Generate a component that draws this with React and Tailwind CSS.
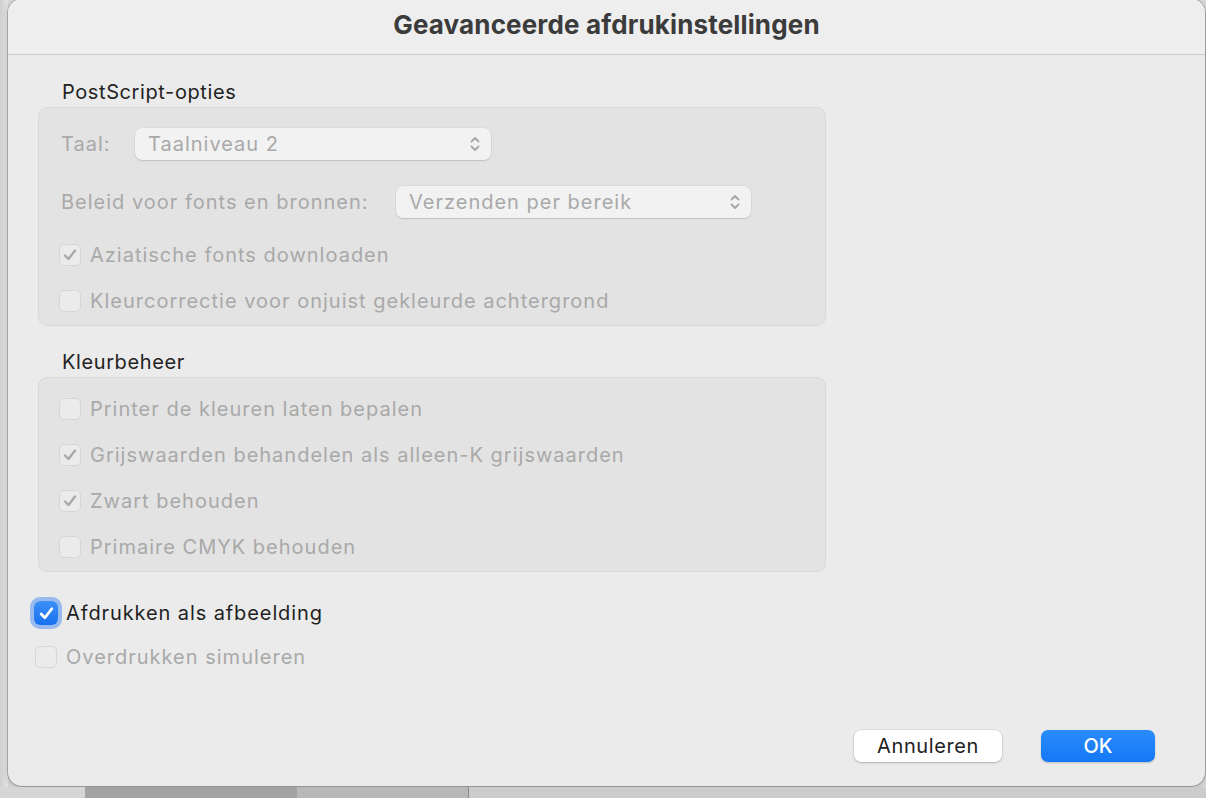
import React from 'react';

const font = { fontFamily: 'Inter, "Noto Sans", sans-serif' };

function Chevrons() {
    return (
        <svg width="12" height="18" viewBox="0 0 12 18" fill="none" stroke="#a6a6a6" strokeWidth="1.8" strokeLinecap="round" strokeLinejoin="round">
            <path d="M2.5 6.5 L6 3 L9.5 6.5" />
            <path d="M2.5 11.5 L6 15 L9.5 11.5" />
        </svg>
    );
}

function Popup({ label, width }) {
    return (
        <div className={`${width} h-[32px] rounded-[7px] bg-[#f2f2f2] shadow-[0_0_0_0.5px_rgba(0,0,0,0.06),0_1px_1.5px_rgba(0,0,0,0.12)] flex items-center justify-between pl-[13px] pr-[10px]`}>
            <span className="text-[20px] tracking-[1px] text-[#a9a9a9] leading-none">{label}</span>
            <Chevrons />
        </div>
    );
}

function DisabledCheck({ checked, label, className = '' }) {
    return (
        <div className={`flex items-center h-[24px] ${className}`}>
            <div className="w-[22px] h-[22px] rounded-[5px] bg-[#ebebeb] border border-[#d6d6d6] flex items-center justify-center">
                {checked && (
                    <svg width="16" height="16" viewBox="0 0 16 16" fill="none" stroke="#a9a9a9" strokeWidth="2.4" strokeLinecap="round" strokeLinejoin="round">
                        <path d="M3 8.5 L6.5 12 L13 3.5" />
                    </svg>
                )}
            </div>
            <span className="ml-[9px] text-[20px] tracking-[1px] text-[#a9a9a9] leading-none whitespace-nowrap">{label}</span>
        </div>
    );
}

export default function App() {
    return (
        <div className="w-[1206px] h-[798px] overflow-hidden flex flex-col bg-[#d9d9d9]" style={font}>
            <div className="flex h-[787px]">
                <div className="w-[8px] bg-gradient-to-r from-[#cfcfcf] to-[#e4e4e4]" />
                {/* Dialog */}
                <div className="w-[1197px] h-[787px] -mt-[1px] rounded-[14px] bg-[#ebebeb] overflow-hidden flex flex-col shadow-[0_0_0_1px_rgba(0,0,0,0.22),0_2px_6px_rgba(0,0,0,0.18)]">
                    <header className="h-[56px] shrink-0 bg-[#eeeeee] border-b border-[#cbcbcb] flex items-center justify-center pb-[5px]">
                        <h1 className="text-[26px] font-bold text-[#3b3b3b] tracking-[0.15px]">Geavanceerde afdrukinstellingen</h1>
                    </header>

                    <main className="flex-1 flex flex-col pl-[30px]">
                        {/* PostScript */}
                        <div className="mt-[25px] ml-[24px] h-[24px] flex items-center text-[20px] tracking-[0.6px] text-[#232323]">PostScript-opties</div>
                        <section className="mt-[3px] w-[788px] h-[219px] rounded-[9px] bg-[#e3e3e3] border border-[#d9d9d9] flex flex-col pl-[22px] pt-[20px]">
                            <div className="flex items-center">
                                <span className="w-[74px] text-[20px] tracking-[1px] text-[#a9a9a9]">Taal:</span>
                                <Popup label="Taalniveau 2" width="w-[356px]" />
                            </div>
                            <div className="flex items-center mt-[26px]">
                                <span className="w-[335px] text-[20px] tracking-[1px] text-[#a9a9a9]">Beleid voor fonts en bronnen:</span>
                                <Popup label="Verzenden per bereik" width="w-[355px]" />
                            </div>
                            <DisabledCheck checked label="Aziatische fonts downloaden" className="mt-[25px] -ml-[2px]" />
                            <DisabledCheck label="Kleurcorrectie voor onjuist gekleurde achtergrond" className="mt-[22px] -ml-[2px]" />
                        </section>

                        {/* Kleurbeheer */}
                        <div className="mt-[24px] ml-[24px] h-[24px] flex items-center text-[20px] tracking-[0.6px] text-[#232323]">Kleurbeheer</div>
                        <section className="mt-[3px] w-[788px] h-[195px] rounded-[9px] bg-[#e3e3e3] border border-[#d9d9d9] flex flex-col pl-[20px] pt-[19px]">
                            <DisabledCheck label="Printer de kleuren laten bepalen" />
                            <DisabledCheck checked label="Grijswaarden behandelen als alleen-K grijswaarden" className="mt-[22px]" />
                            <DisabledCheck checked label="Zwart behouden" className="mt-[22px]" />
                            <DisabledCheck label="Primaire CMYK behouden" className="mt-[22px]" />
                        </section>

                        {/* Bottom options */}
                        <div className="mt-[29px] -ml-[4px] flex items-center h-[24px]">
                            <div className="w-[24px] h-[24px] rounded-[6px] bg-gradient-to-b from-[#3b8ff7] to-[#1672ef] flex items-center justify-center shadow-[0_0_0_4px_rgba(84,146,240,0.55)]">
                                <svg width="17" height="17" viewBox="0 0 16 16" fill="none" stroke="#ffffff" strokeWidth="2.6" strokeLinecap="round" strokeLinejoin="round">
                                    <path d="M3 8.5 L6.5 12 L13 3.5" />
                                </svg>
                            </div>
                            <span className="ml-[8px] text-[20px] tracking-[0.9px] text-[#1f1f1f] leading-none">Afdrukken als afbeelding</span>
                        </div>
                        <DisabledCheck label="Overdrukken simuleren" className="mt-[20px] -ml-[3px]" />

                        <div className="flex-1" />
                        <footer className="flex justify-end gap-[39px] pr-[50px] mb-[24px]">
                            <button className="w-[148px] h-[32px] rounded-[7px] bg-white shadow-[0_0_0_0.5px_rgba(0,0,0,0.12),0_1px_2px_rgba(0,0,0,0.2)] text-[20px] tracking-[0.6px] text-[#222]">Annuleren</button>
                            <button className="w-[114px] h-[32px] rounded-[7px] bg-gradient-to-b from-[#2a8bfb] to-[#1478f6] shadow-[0_1px_2px_rgba(0,0,0,0.2)] text-[20px] font-medium text-white">OK</button>
                        </footer>
                    </main>
                </div>
            </div>
            {/* strip of window behind */}
            <div className="flex-1 flex">
                <div className="w-[85px] bg-[#d6d6d6]" />
                <div className="w-[212px] bg-[#a3a3a3]" />
                <div className="w-[172px] bg-[#b8b8b8] border-r border-[#8a8a8a]" />
                <div className="flex-1 bg-[#cccccc]" />
            </div>
        </div>
    );
}
